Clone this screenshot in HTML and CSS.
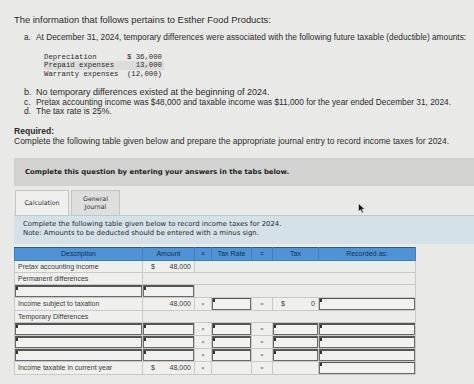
FILE: index.html
```html
<!DOCTYPE html>
<html>
<head>
<meta charset="utf-8">
<link rel="stylesheet" href="styles.css">
</head>
<body>
<div class="page">
  <p class="intro">The information that follows pertains to Esther Food Products:</p>
  <div class="item item-a"><span class="lbl">a.</span><span>At December 31, 2024, temporary differences were associated with the following future taxable (deductible) amounts:</span></div>
  <div class="mono">
    <div class="mrow"><span>Depreciation</span><span>$ 36,000</span></div>
    <div class="mrow hl"><span>Prepaid expenses</span><span>13,000</span></div>
    <div class="mrow"><span>Warranty expenses</span><span>(12,000)</span></div>
  </div>
  <div class="list">
    <div class="item item-b"><span class="lbl">b.</span><span>No temporary differences existed at the beginning of 2024.</span></div>
    <div class="item item-c"><span class="lbl">c.</span><span>Pretax accounting income was $48,000 and taxable income was $11,000 for the year ended December 31, 2024.</span></div>
    <div class="item"><span class="lbl">d.</span><span>The tax rate is 25%.</span></div>
  </div>
  <p class="req">Required:</p>
  <p class="reqtext">Complete the following table given below and prepare the appropriate journal entry to record income taxes for 2024.</p>

  <div class="banner">Complete this question by entering your answers in the tabs below.</div>

  <div class="tabs">
    <div class="tab active">Calculation</div>
    <div class="tab">General<br>Journal</div>
  </div>
  <div class="instr">
    <div>Complete the following table given below to record income taxes for 2024.</div>
    <div>Note: Amounts to be deducted should be entered with a minus sign.</div>
  </div>

  <table class="calc">
    <colgroup>
      <col class="c-desc"><col class="c-amt"><col class="c-op"><col class="c-rate"><col class="c-eq"><col class="c-tax"><col class="c-rec">
    </colgroup>
    <tr class="head">
      <th>Description</th><th>Amount</th><th>×</th><th>Tax Rate</th><th>=</th><th>Tax</th><th>Recorded as:</th>
    </tr>
    <tr>
      <td>Pretax accounting income</td><td class="num"><span class="cur">$</span>48,000</td><td class="blank" colspan="5"></td>
    </tr>
    <tr>
      <td>Permanent differences</td><td class="blank" colspan="6"></td>
    </tr>
    <tr class="inrow">
      <td class="in"><div class="box"></div></td><td class="in"><div class="box"></div></td><td class="blank" colspan="5"></td>
    </tr>
    <tr>
      <td>Income subject to taxation</td><td class="num">48,000</td><td class="op">×</td><td class="in"><div class="box"></div></td><td class="op">=</td><td class="num"><span class="cur">$</span>0</td><td class="in"><div class="box"></div></td>
    </tr>
    <tr>
      <td>Temporary Differences</td><td class="blank" colspan="6"></td>
    </tr>
    <tr class="inrow">
      <td class="in"><div class="box"></div></td><td class="in"><div class="box"></div></td><td class="op">×</td><td class="in"><div class="box"></div></td><td class="op">=</td><td class="in"><div class="box"></div></td><td class="in"><div class="box"></div></td>
    </tr>
    <tr class="inrow">
      <td class="in"><div class="box"></div></td><td class="in"><div class="box"></div></td><td class="op">×</td><td class="in"><div class="box"></div></td><td class="op">=</td><td class="in"><div class="box"></div></td><td class="in"><div class="box"></div></td>
    </tr>
    <tr class="inrow">
      <td class="in"><div class="box"></div></td><td class="in"><div class="box"></div></td><td class="op">×</td><td class="in"><div class="box"></div></td><td class="op">=</td><td class="in"><div class="box"></div></td><td class="in"><div class="box"></div></td>
    </tr>
    <tr>
      <td>Income taxable in current year</td><td class="num"><span class="cur">$</span>48,000</td><td class="op">×</td><td></td><td class="op">=</td><td></td><td class="in"><div class="box"></div></td>
    </tr>
  </table>
  <svg class="cursor" width="8" height="11" viewBox="0 0 8 11"><path d="M0.5 0.5 L0.5 8.5 L2.5 6.8 L4 10 L5.4 9.4 L4 6.3 L6.8 6.3 Z" fill="#111" stroke="#eee" stroke-width="0.6"/></svg>
</div>
</body>
</html>
```

FILE: styles.css
```css
html, body {
  margin: 0;
  padding: 0;
}
body {
  background: #e9e9e7;
  width: 474px;
  height: 384px;
  overflow: hidden;
  font-family: "Liberation Sans", Arial, sans-serif;
  color: #2b2b2b;
}
.page {
  position: relative;
  padding: 14px 0 0 14px;
}
p { margin: 0; }
.intro {
  font-size: 9.4px;
  line-height: 11px;
}
.item {
  display: flex;
  font-size: 8.5px;
  line-height: 9.5px;
  padding-left: 10px;
  white-space: nowrap;
}
.item .lbl {
  width: 12px;
  flex: none;
}
.item-a {
  margin-top: 8px;
  font-size: 8.3px;
}
.item-b {
  font-size: 9px;
}
.item-c {
  font-size: 8.3px;
}
.mono {
  font-family: "Liberation Mono", "DejaVu Sans Mono", monospace;
  font-size: 7.3px;
  line-height: 8.6px;
  margin: 10px 0 0 30px;
  width: 120px;
}
.mrow {
  display: flex;
  justify-content: space-between;
  padding-right: 2px;
}
.mrow.hl {
  background: #dcdcda;
}
.list {
  margin-top: 10px;
}
.req {
  margin-top: 9px;
  font-weight: bold;
  font-size: 8.6px;
  line-height: 10px;
}
.reqtext {
  font-size: 8.5px;
  line-height: 10px;
}
.banner {
  margin-top: 12px;
  background: #d2d2d0;
  height: 28px;
  line-height: 28px;
  padding-left: 11px;
  font-family: "DejaVu Sans", Verdana, sans-serif;
  font-weight: bold;
  font-size: 6.9px;
  color: #222;
}
.tabs {
  display: flex;
  margin-top: 4px;
  margin-left: 1px;
  gap: 2px;
  align-items: flex-end;
}
.tab {
  font-family: "DejaVu Sans", Verdana, sans-serif;
  font-size: 6.3px;
  line-height: 8px;
  color: #333;
  height: 24px;
  display: flex;
  align-items: center;
  justify-content: center;
  text-align: center;
  border: 1px solid #c4c4c2;
  border-bottom: none;
  background: #dededc;
}
.tab.active {
  width: 52px;
  background: #efefed;
}
.tab:not(.active) {
  width: 47px;
}
.instr {
  background: #d5e1e9;
  border-top: 1px solid #b8cad6;
  font-family: "DejaVu Sans", Verdana, sans-serif;
  font-size: 6.9px;
  line-height: 9.5px;
  color: #2a2a2a;
  padding: 4px 0 5px 9px;
}
.calc {
  margin-top: 3px;
  border-collapse: collapse;
  table-layout: fixed;
  width: 401px;
  font-size: 7px;
  color: #3a3a3a;
}
.c-desc { width: 128px; }
.c-amt { width: 52px; }
.c-op { width: 17px; }
.c-rate { width: 40px; }
.c-eq { width: 21px; }
.c-tax { width: 46px; }
.c-rec { width: 97px; }
.calc th {
  background: #4f93d6;
  color: #17314f;
  font-weight: normal;
  font-size: 7px;
  height: 12px;
  padding: 0;
  border: 1px solid #3d7fc0;
  border-top-color: #2e5c88;
}
.calc td {
  height: 11px;
  padding: 0 3px;
  border: 1px solid #c9c9c7;
  background: #efefed;
  white-space: nowrap;
}
.calc td.blank {
  background: #ececea;
}
.calc td.num {
  text-align: right;
}
.calc td .cur {
  float: left;
  padding-left: 5px;
}
.calc td.op {
  text-align: center;
  font-size: 5px;
  padding: 0;
  color: #555;
}
.calc td.in {
  padding: 0;
}
.box {
  height: 10px;
  border: 1px solid #6a6a6a;
  border-top-color: #555;
  background: #f2f2f0;
  position: relative;
}
.box::before {
  content: "";
  position: absolute;
  left: 0;
  top: 0;
  width: 2px;
  height: 3px;
  background: #333;
}
.inrow td.in .box {
  border-width: 2px 1px 1px 1px;
  height: 9px;
}
.cursor {
  position: absolute;
  left: 358px;
  top: 203px;
}
```
